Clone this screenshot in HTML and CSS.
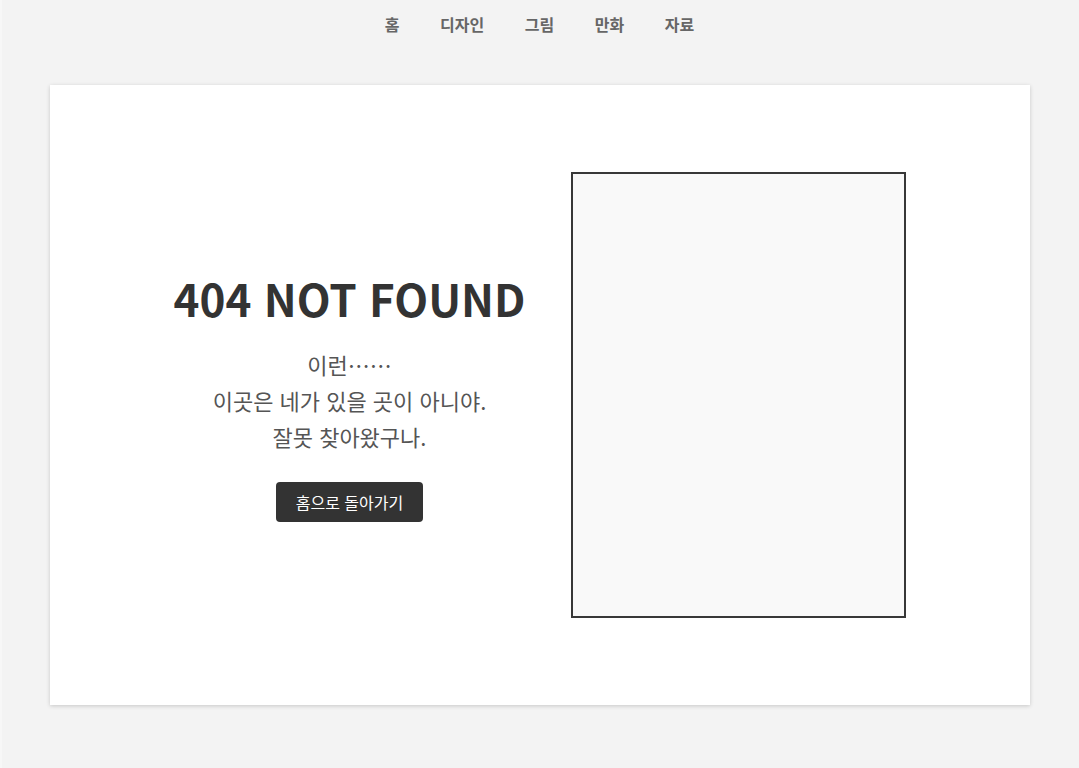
FILE: index.html
```
<!DOCTYPE html>
<html lang="ko">
<head>
  <meta charset="UTF-8" />
  <meta name="viewport" content="width=device-width, initial-scale=1.0" />
  <title>404 NOT FOUND</title>
  <link rel="stylesheet" href="styles.css">
</head>
<body>

  <nav class="menu">
    <a href="#">홈</a>
    <a href="#">디자인</a>
    <a href="#">그림</a>
    <a href="#">만화</a>
    <a href="#">자료</a>
  </nav>

  <main class="card">
    <div class="pesan">
      <h1>404 NOT FOUND</h1>
      <p>이런……<br>이곳은 네가 있을 곳이 아니야.<br>잘못 찾아왔구나.</p>
      <a class="tombol" href="#">홈으로 돌아가기</a>
    </div>
    <div class="gambar"></div>
  </main>

</body>
</html>
```

FILE: styles.css
```
* {
  box-sizing: border-box;
}

body {
  margin: 0;
  padding: 0;
  background: #f3f3f3;
  box-shadow: inset 2px 0 #f7f7f7;
  min-height: 100vh;
  font-family: "Noto Sans CJK KR", "Noto Sans", sans-serif;
  color: #333;
}

.menu {
  display: flex;
  justify-content: center;
  gap: 40.5px;
  height: 48px;
  align-items: center;
}

.menu a {
  color: #666;
  font-weight: bold;
  font-size: 16px;
  text-decoration: none;
}

.card {
  width: 980px;
  height: 620px;
  margin: 37px 0 0 50px;
  background: #fff;
  box-shadow: 0 1px 4px rgba(0, 0, 0, 0.18);
  display: flex;
  justify-content: center;
  align-items: center;
  gap: 46px;
}

.pesan {
  text-align: center;
  padding-top: 4px;
}

h1 {
  margin: 0 0 22px;
  font-size: 44px;
  line-height: 1.2;
  color: #333;
}

.pesan p {
  margin: 0 0 28px;
  font-size: 22px;
  line-height: 36px;
  color: #555;
}

.tombol {
  display: inline-block;
  background: #333;
  color: #fff;
  text-decoration: none;
  font-size: 16px;
  padding: 0 19.5px;
  line-height: 40px;
  border-radius: 4px;
}

.gambar {
  width: 335px;
  height: 446px;
  border: 2px solid #383838;
  background: #f9f9f9;
}
```
